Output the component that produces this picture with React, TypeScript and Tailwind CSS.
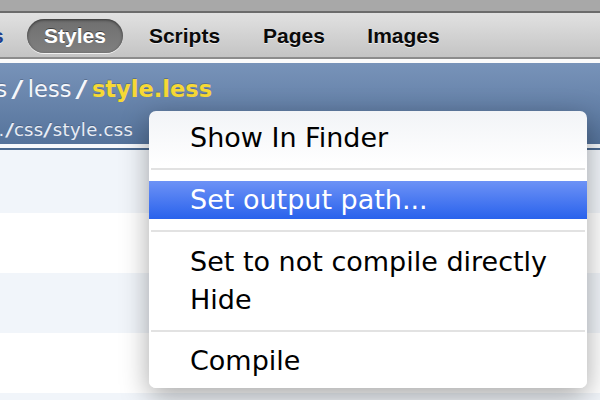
export default function App() {
  const sep = "mx-[2px] h-[2px] bg-[#e2e2e2]";
  return (
    <div className="relative w-[600px] h-[400px] overflow-hidden bg-white">
      <div className="h-[11px] bg-[#a8a8a8]" />
      <div className="h-[2px] bg-[#6c6c6c]" />
      <div className="h-[44px] flex items-center pt-[2px] bg-[linear-gradient(to_bottom,#e1e1e1,#c4c4c4)] font-['Liberation_Sans',Arial,sans-serif] text-[21px] font-bold leading-[24px] text-[#0a0a0a] [text-shadow:0_1px_0_rgba(255,255,255,0.6)]">
        <div className="w-[4px] overflow-hidden shrink-0">
          <span className="block ml-[-8px] text-[#1d3f8e]">s</span>
        </div>
        <div className="ml-[16.25px] w-[109.5px] shrink-0 flex justify-center">
          <div className="w-[96px] h-[34px] rounded-full bg-[linear-gradient(to_bottom,#6f6f6f,#808080)] shadow-[inset_0_1px_3px_rgba(0,0,0,0.55),0_1px_0_rgba(255,255,255,0.75)] flex items-center justify-center text-white [text-shadow:0_-1px_0_rgba(0,0,0,0.45)]">
            Styles
          </div>
        </div>
        <div className="w-[109.5px] shrink-0 text-center">Scripts</div>
        <div className="w-[109.5px] shrink-0 text-center">Pages</div>
        <div className="w-[109.5px] shrink-0 text-center">Images</div>
      </div>
      <div className="h-[2px] bg-[#8c8c8c]" />
      <div className="h-[4px] bg-[#fbfbfb]" />
      <div className="h-[81px] flex flex-col pt-[13px] bg-[linear-gradient(to_bottom,#7893b9,#55739b)] font-['DejaVu_Sans',sans-serif] whitespace-nowrap [text-shadow:0_-1px_0_rgba(0,0,0,0.2)]">
        <div className="ml-[-4.5px] text-[22.5px] leading-[26px] text-[#f5f7fb]">
          <span>s</span>
          <span className="inline-block px-[6.5px] scale-x-[1.6]">/</span>
          <span>less</span>
          <span className="inline-block px-[6.5px] scale-x-[1.6]">/</span>
          <span className="font-bold text-[#f6d935]">style.less</span>
        </div>
        <div className="mt-[17px] ml-[-1.5px] text-[18px] leading-[22px] tracking-[0.3px] text-[#e8edf5]">
          <span>.</span>
          <span className="inline-block px-[1.5px] scale-x-[1.5]">/</span>
          <span>css</span>
          <span className="inline-block px-[1.5px] scale-x-[1.5]">/</span>
          <span>style.css</span>
        </div>
      </div>
      <div className="h-[4px] bg-[#f7f9fc]" />
      <div className="h-[2px] bg-[#4c6a90]" />
      <div className="h-[63px] bg-[#f1f5fa]" />
      <div className="h-[60px] bg-white" />
      <div className="h-[60px] bg-[#f1f5fa]" />
      <div className="h-[60px] bg-white" />
      <div className="h-[60px] bg-[#f1f5fa]" />

      <div className="absolute left-[149px] top-[111px] w-[438px] rounded-[7px] bg-[linear-gradient(to_bottom,#f2f4f7,#ffffff_55px)] shadow-[0_8px_28px_rgba(0,0,0,0.35)] py-[8px] font-['DejaVu_Sans',sans-serif] text-[27px] leading-[38px] text-black whitespace-nowrap">
        <div className="h-[38px] pl-[41px]">Show In Finder</div>
        <div className={sep + " mt-[11px] mb-[11px]"} />
        <div className="h-[38px] pl-[41px] text-white bg-[linear-gradient(to_bottom,#6d92f6,#2962ec)]">Set output path...</div>
        <div className={sep + " mt-[11px] mb-[11px]"} />
        <div className="h-[38px] pl-[41px]">Set to not compile directly</div>
        <div className="h-[38px] pl-[41px]">Hide</div>
        <div className={sep + " mt-[11px] mb-[10px]"} />
        <div className="h-[38px] pl-[41px]">Compile</div>
      </div>
    </div>
  );
}
